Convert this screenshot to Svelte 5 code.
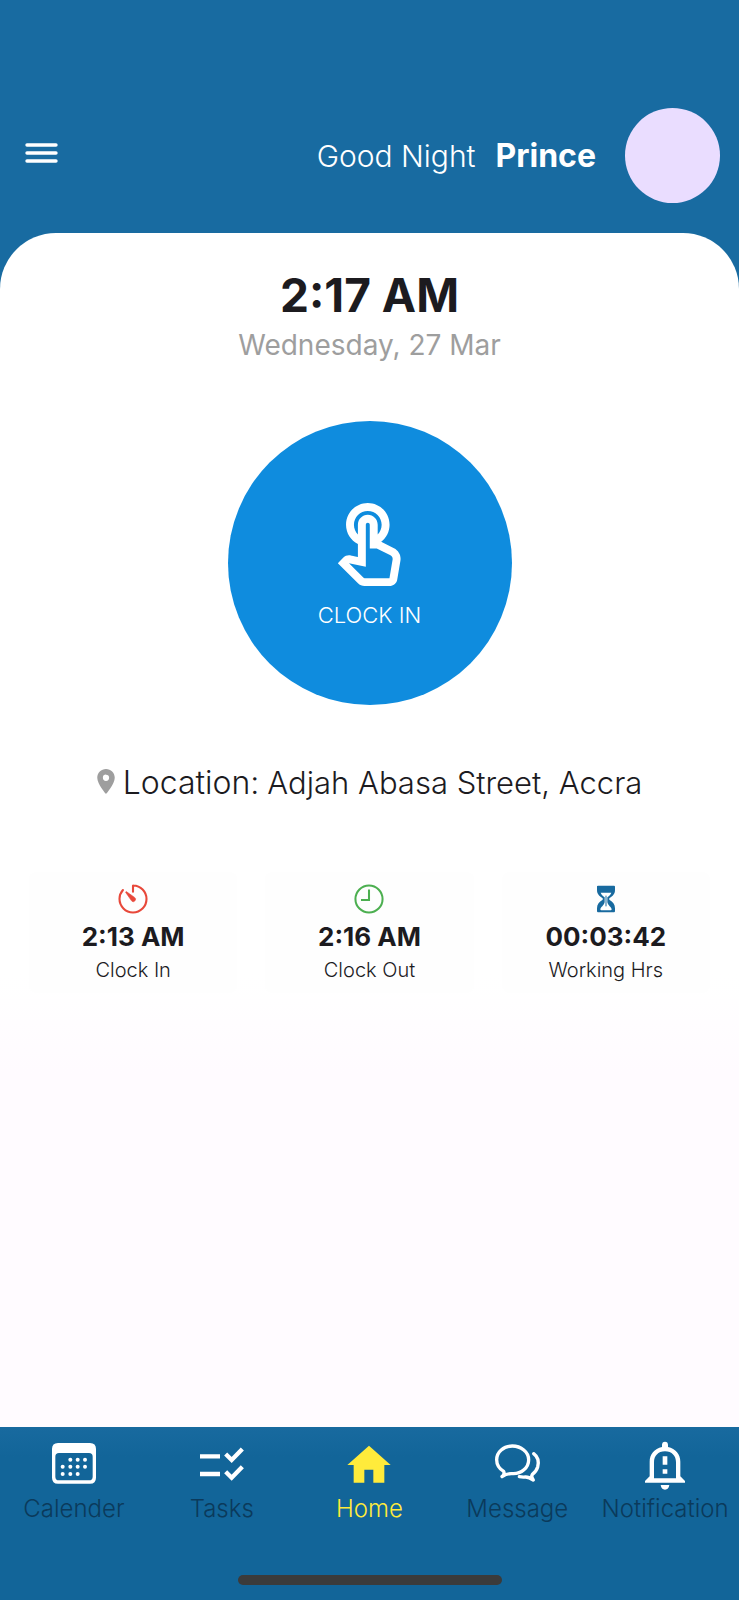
<script>
  const time = '2:17 AM';
  const date = 'Wednesday, 27 Mar';
  const stats = [
    { icon: 'timer', value: '2:13 AM', label: 'Clock In' },
    { icon: 'clock', value: '2:16 AM', label: 'Clock Out' },
    { icon: 'hourglass', value: '00:03:42', label: 'Working Hrs' }
  ];
  const tabs = ['Calender', 'Tasks', 'Home', 'Message', 'Notification'];
  let active = $state('Home');

  const dots = [
    [61, 56], [83, 56], [105, 56],
    [38, 77], [61, 77], [83, 77], [105, 77],
    [38, 99], [61, 99], [83, 99]
  ];
</script>

<div class="screen">
  <header>
    <button class="menu" aria-label="Menu">
      <svg viewBox="0 0 34 22" width="34" height="22" stroke="currentColor" stroke-width="3.400" stroke-linecap="round">
        <path d="M3 3H32M3 11H32M3 19H32" />
      </svg>
    </button>
    <p class="greeting"><span>Good Night</span><strong>Prince</strong></p>
    <div class="avatar"></div>
  </header>

  <main>
    <section class="sheet">
      <h1>{time}</h1>
      <p class="date">{date}</p>

      <button class="punch">
        <svg viewBox="0 0 24 24" width="95" height="95" fill="currentColor">
          <path d="M18.190 12.440l-3.240-1.620c1.290-1 2.120-2.560 2.120-4.320 0-3.030-2.470-5.500-5.500-5.500s-5.500 2.470-5.500 5.500c0 2.130 1.220 3.980 3 4.890v3.260c-2.110-.45-2.010-.44-2.260-.44-.53 0-1.030.21-1.410.59L4 16.220l5.090 5.090c.43.44 1.030.69 1.650.69h6.300c.98 0 1.810-.7 1.970-1.670l.8-4.710c.22-1.300-.43-2.580-1.620-3.180zm-.35 2.850l-.8 4.710h-6.300c-.09 0-.17-.04-.24-.1l-3.680-3.680 4.250.89V6.500c0-.28.22-.5.5-.5s.5.220.5.5v6h1.760l3.460 1.730c.4.2.620.63.550 1.060zM8.070 6.500c0-1.930 1.570-3.500 3.500-3.500s3.500 1.570 3.500 3.500c0 .95-.38 1.810-1 2.440V6.500c0-1.380-1.120-2.500-2.500-2.500s-2.500 1.120-2.500 2.500v2.440c-.62-.63-1-1.490-1-2.440z" />
        </svg>
        <span>CLOCK IN</span>
      </button>

      <p class="location">
        <svg viewBox="5 2 14 20" width="18" height="25" fill="#9e9e9e">
          <path d="M12 2C8.130 2 5 5.130 5 9c0 5.250 7 13 7 13s7-7.750 7-13c0-3.870-3.130-7-7-7zm0 9.500a2.500 2.500 0 1 1 0-5 2.500 2.500 0 0 1 0 5z" />
        </svg>
        <span class="key">Location:</span>
        <span>Adjah Abasa Street, Accra</span>
      </p>

      <ul class="stats">
        {#each stats as s}
          <li>
            {#if s.icon === 'timer'}
              <svg viewBox="0 0 512 512" width="36" height="36">
                <path d="M113 128A192 192 0 0 0 64 254c-1 106 86 194 192 194 106 0 192-86 192-192 0-105-84-190-187-192a4 4 0 0 0-5 4v84" fill="none" stroke="#e8483a" stroke-width="30" stroke-linecap="round" stroke-linejoin="round" />
                <path d="M233 279l-79-113a8 8 0 0 1 12-12l113 79a32 32 0 0 1-38 54 33 33 0 0 1-8-8z" fill="#e8483a" stroke="#e8483a" stroke-width="8" />
              </svg>
            {:else if s.icon === 'clock'}
              <svg viewBox="0 0 512 512" width="36" height="36" fill="none" stroke="#4caf50" stroke-width="29">
                <circle cx="256" cy="256" r="193" />
                <path d="M256 120V270H142" />
              </svg>
            {:else}
              <svg viewBox="0 0 108 108" width="36" height="36">
                <path fill="#186a9f" d="M27 16Q27 14 30 14H78Q81 14 81 17V27C81 39 74 46 65 51Q61 54 65 57C74 62 81 70 81 82V90Q81 94 78 94H30Q27 94 27 90V82C27 70 34 62 43 57Q47 54 43 51C34 46 27 39 27 27Z" />
                <path fill="#fff" d="M38 35H70C68 42 62 45 58 49V64C61 75 69 77 71 85Q71 88 68 88H40Q37 88 37 85C39 77 47 75 50 64V49C46 45 40 42 38 35Z" />
                <path d="M54 44V76" stroke="#186a9f" stroke-width="3" />
              </svg>
            {/if}
            <strong>{s.value}</strong>
            <span>{s.label}</span>
          </li>
        {/each}
      </ul>
    </section>
  </main>

  <footer>
    <nav>
      {#each tabs as tab}
        <button class:active={active === tab} onclick={() => (active = tab)}>
          {#if tab === 'Calender'}
            <svg viewBox="0 0 144 144">
              <path fill="#fff" fill-rule="evenodd" d="M24 6H120Q138 6 138 24V110Q138 128 120 128H24Q6 128 6 110V24Q6 6 24 6ZM27 36Q16 36 16 47V107Q16 118 27 118H117Q128 118 128 107V47Q128 36 117 36Z" />
              {#each dots as [x, y]}
                <circle cx={x} cy={y} r="6" fill="#fff" />
              {/each}
            </svg>
          {:else if tab === 'Tasks'}
            <svg viewBox="0 0 144 144" fill="none" stroke="#fff" stroke-width="13">
              <path d="M6 46H66M6 99H66M83 39L101 57L133 24M83 92L101 110L133 77" />
            </svg>
          {:else if tab === 'Home'}
            <svg viewBox="0 0 144 144" fill="#ffeb3b">
              <path d="M72 14L137 72H118V125H85V86H58V125H26V72H7Z" />
            </svg>
          {:else if tab === 'Message'}
            <svg viewBox="0 0 144 144" fill="none" stroke="#fff" stroke-width="10" stroke-linecap="round" stroke-linejoin="round">
              <path d="M27 107Q36 100 32 91C19 83 11 71 11 56C11 33 32 15 58 15S107 33 107 56C107 80 85 99 59 98C49 97 40 98 27 107Z" />
              <path d="M122 38C134 47 138 63 134 78C131 88 126 94 118 100C114 106 117 112 121 117C112 111 107 108 98 108Q88 109 79 107" />
            </svg>
          {:else}
            <svg viewBox="0 0 144 144" fill="#fff">
              <path fill-rule="evenodd" d="M72 2Q81 2 81 12V18C104 23 118 40 118 62V106L132 120V125H12V120L26 106V62C26 40 40 23 63 18V12Q63 2 72 2ZM72 31C51 31 39 45 39 64V112H105V64C105 45 93 31 72 31Z" />
              <path d="M65 46H79V71H65ZM65 85H79V98H65ZM59 132H85Q83 146 72 146T59 132Z" />
            </svg>
          {/if}
          <span>{tab}</span>
        </button>
      {/each}
    </nav>
    <div class="indicator"></div>
  </footer>
</div>

<style>
  :global(body) {
    margin: 0;
    background: #fffbff;
  }
  .screen {
    min-height: 100vh;
    display: flex;
    flex-direction: column;
    font-family: Inter, 'Open Sans', sans-serif;
    font-weight: 300;
    color: #1c1b1f;
    background: #fffbff;
  }
  p, h1, ul {
    margin: 0;
    padding: 0;
  }
  button {
    border: 0;
    padding: 0;
    background: none;
    color: #fff;
    font: inherit;
    cursor: pointer;
  }
  svg {
    display: block;
    flex: none;
  }
  header {
    box-sizing: border-box;
    display: flex;
    align-items: center;
    padding: 108px 19px 30px 24px;
    background: #186ba1;
    color: #fff;
  }
  .menu {
    padding-bottom: 6px;
  }
  .greeting {
    margin-left: auto;
    display: flex;
    align-items: baseline;
    gap: 20px;
    font-size: 30px;
    line-height: 36px;
    white-space: nowrap;
  }
  .greeting strong {
    font-size: 32px;
    font-weight: 700;
  }
  .avatar {
    flex: none;
    width: 95px;
    height: 95px;
    margin-left: 29px;
    border-radius: 50%;
    background: #eaddff;
  }
  main {
    flex: 1;
    background: linear-gradient(#186ba1 80px, #fff 80px, #fff 740px, #fffbff 840px);
  }
  .sheet {
    display: flex;
    flex-direction: column;
    align-items: center;
    padding: 36px 29px 32px;
    border-radius: 56px 56px 0 0;
    background: linear-gradient(#fff 740px, transparent);
  }
  h1 {
    font-size: 46px;
    line-height: 52px;
    font-weight: 700;
  }
  .date {
    margin-top: 8px;
    font-size: 28px;
    line-height: 32px;
    font-weight: 400;
    color: #9e9e9e;
  }
  .punch {
    display: flex;
    flex-direction: column;
    align-items: center;
    justify-content: center;
    gap: 8px;
    width: 284px;
    height: 284px;
    margin-top: 60px;
    border-radius: 50%;
    background: #0f8cde;
    font-size: 22px;
    line-height: 26px;
  }
  .location {
    display: flex;
    align-items: baseline;
    gap: 8px;
    margin-top: 58px;
    font-size: 31px;
    line-height: 40px;
  }
  .location .key {
    font-size: 32px;
  }
  .stats {
    align-self: stretch;
    display: grid;
    grid-template-columns: repeat(3, 1fr);
    gap: 28px;
    margin-top: 69px;
    list-style: none;
  }
  .stats li {
    display: flex;
    flex-direction: column;
    align-items: center;
    padding: 9px 0 10px;
    border-radius: 8px;
    background: #fefefe;
  }
  .stats strong {
    margin-top: 4px;
    font-size: 26px;
    line-height: 32px;
    font-weight: 700;
  }
  .stats span {
    margin-top: 4px;
    font-size: 20px;
    line-height: 26px;
  }
  footer {
    padding: 14px 0 15px;
    background: linear-gradient(#186a9f, #126599 30px);
  }
  nav {
    display: grid;
    grid-template-columns: repeat(5, 1fr);
  }
  nav button {
    display: flex;
    flex-direction: column;
    align-items: center;
    gap: 4px;
    color: #0b3a5b;
    font-size: 24px;
    line-height: 32px;
  }
  nav svg {
    width: 48px;
    height: 48px;
    overflow: visible;
  }
  nav .active {
    color: #ffeb3b;
  }
  .indicator {
    width: 264px;
    height: 10px;
    margin: 50px auto 0;
    border-radius: 5px;
    background: #3b3b3b;
  }
</style>
